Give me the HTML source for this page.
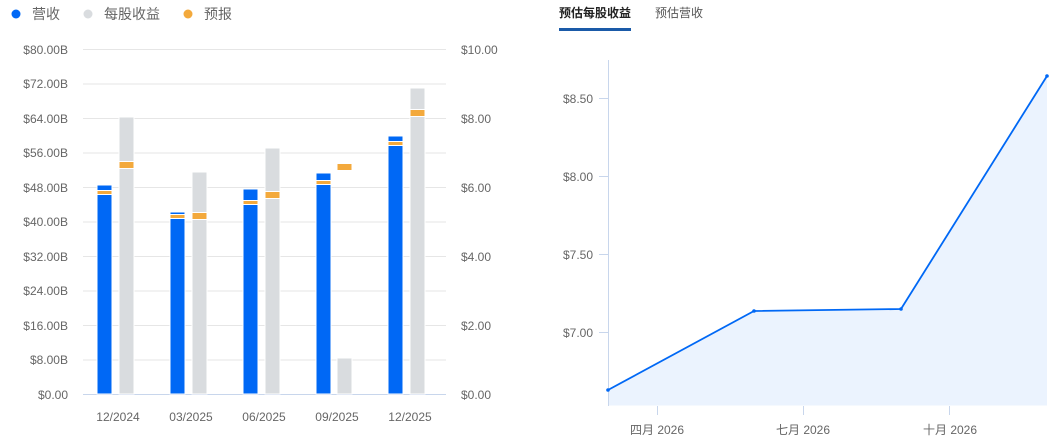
<!DOCTYPE html>
<html><head><meta charset="utf-8"><style>
html,body{margin:0;padding:0;background:#fff;width:1061px;height:444px;overflow:hidden;font-family:"Liberation Sans","Noto Sans CJK SC",sans-serif}
svg{position:absolute;left:0;top:0}
text{font-family:"Liberation Sans","Noto Sans CJK SC",sans-serif}
</style></head><body>
<svg width="1061" height="444" viewBox="0 0 1061 444">
<!-- legend -->
<circle cx="16" cy="14" r="4.5" fill="#0068f5"/>
<text x="32" y="19" font-size="14" fill="#666">营收</text>
<circle cx="88" cy="14" r="4.5" fill="#d9dcdf"/>
<text x="104" y="19" font-size="14" fill="#666">每股收益</text>
<circle cx="188" cy="14" r="4.5" fill="#f3a93c"/>
<text x="204" y="19" font-size="14" fill="#666">预报</text>
<!-- grid -->
<g stroke="#e6e6e6" stroke-width="1">
<line x1="83" y1="49.5" x2="446" y2="49.5"/>
<line x1="83" y1="84" x2="446" y2="84"/>
<line x1="83" y1="118.5" x2="446" y2="118.5"/>
<line x1="83" y1="153" x2="446" y2="153"/>
<line x1="83" y1="187.5" x2="446" y2="187.5"/>
<line x1="83" y1="222" x2="446" y2="222"/>
<line x1="83" y1="256.5" x2="446" y2="256.5"/>
<line x1="83" y1="291" x2="446" y2="291"/>
<line x1="83" y1="325.5" x2="446" y2="325.5"/>
<line x1="83" y1="360" x2="446" y2="360"/>
</g>
<line x1="83" y1="394.5" x2="446" y2="394.5" stroke="#c8d6ec"/>
<g font-size="12" fill="#666" text-anchor="end">
<text x="68" y="54">$80.00B</text><text x="68" y="88">$72.00B</text><text x="68" y="123">$64.00B</text>
<text x="68" y="157">$56.00B</text><text x="68" y="192">$48.00B</text><text x="68" y="226">$40.00B</text>
<text x="68" y="261">$32.00B</text><text x="68" y="295">$24.00B</text><text x="68" y="330">$16.00B</text>
<text x="68" y="364">$8.00B</text><text x="68" y="399">$0.00</text>
</g>
<g font-size="12" fill="#666">
<text x="461" y="54">$10.00</text><text x="461" y="123">$8.00</text><text x="461" y="192">$6.00</text>
<text x="461" y="261">$4.00</text><text x="461" y="330">$2.00</text><text x="461" y="399">$0.00</text>
</g>
<g font-size="12" fill="#666" text-anchor="middle">
<text x="118" y="421">12/2024</text><text x="191" y="421">03/2025</text><text x="264" y="421">06/2025</text>
<text x="337" y="421">09/2025</text><text x="410" y="421">12/2025</text>
</g>
<!-- bars -->
<g stroke="#fff" stroke-width="1">
<rect x="97" y="185" width="15" height="209" fill="#0068f5"/>
<rect x="119" y="117" width="15" height="277" fill="#d9dcdf"/>
<rect x="170" y="212" width="15" height="182" fill="#0068f5"/>
<rect x="192" y="172" width="15" height="222" fill="#d9dcdf"/>
<rect x="243" y="189" width="15" height="205" fill="#0068f5"/>
<rect x="265" y="148" width="15" height="246" fill="#d9dcdf"/>
<rect x="316" y="173" width="15" height="221" fill="#0068f5"/>
<rect x="337" y="358" width="15" height="36" fill="#d9dcdf"/>
<rect x="388" y="136" width="15" height="258" fill="#0068f5"/>
<rect x="410" y="88" width="15" height="306" fill="#d9dcdf"/>
<!-- markers -->
<rect x="97" y="190.5" width="15" height="4" fill="#f3a93c"/>
<rect x="170" y="214.5" width="15" height="4" fill="#f3a93c"/>
<rect x="243" y="200.5" width="15" height="4" fill="#f3a93c"/>
<rect x="316" y="180.5" width="15" height="4" fill="#f3a93c"/>
<rect x="388" y="141.5" width="15" height="4" fill="#f3a93c"/>
<rect x="119" y="161.5" width="15" height="7" fill="#f3a93c"/>
<rect x="192" y="212.5" width="15" height="7" fill="#f3a93c"/>
<rect x="265" y="191.5" width="15" height="7" fill="#f3a93c"/>
<rect x="337" y="163.5" width="15" height="7" fill="#f3a93c"/>
<rect x="410" y="109.5" width="15" height="7" fill="#f3a93c"/>
</g>
<!-- right: tabs -->
<text x="559" y="17" font-size="12" fill="#222" font-weight="bold">预估每股收益</text>
<text x="655" y="17" font-size="12" fill="#555">预估营收</text>
<rect x="559" y="28" width="72" height="3" fill="#1a5aa8"/>
<!-- line chart -->
<path d="M608,390 L754,311 L901,309 L1047,76 L1047,405.5 L608,405.5Z" fill="#ebf3fe"/>
<line x1="608.5" y1="60" x2="608.5" y2="406" stroke="#c8d6ec"/>
<g stroke="#c8d6ec">
<line x1="599" y1="98.5" x2="608" y2="98.5"/><line x1="599" y1="176.5" x2="608" y2="176.5"/>
<line x1="599" y1="254.5" x2="608" y2="254.5"/><line x1="599" y1="332.5" x2="608" y2="332.5"/>
<line x1="657.5" y1="406" x2="657.5" y2="415"/><line x1="803.5" y1="406" x2="803.5" y2="415"/>
<line x1="949.5" y1="406" x2="949.5" y2="415"/>
</g>
<g font-size="12" fill="#666" text-anchor="end">
<text x="593" y="103">$8.50</text><text x="593" y="181">$8.00</text>
<text x="593" y="259">$7.50</text><text x="593" y="337">$7.00</text>
</g>
<g font-size="12" fill="#666" text-anchor="middle">
<text x="657" y="434">四月 2026</text><text x="803" y="434">七月 2026</text><text x="950" y="434">十月 2026</text>
</g>
<polyline points="608,390 754,311 901,309 1047,76" fill="none" stroke="#0068f5" stroke-width="1.8"/>
<g fill="#0068f5"><circle cx="608" cy="390" r="1.8"/><circle cx="754" cy="311" r="1.8"/><circle cx="901" cy="309" r="1.8"/><circle cx="1047" cy="76" r="1.8"/></g>
</svg>
</body></html>
